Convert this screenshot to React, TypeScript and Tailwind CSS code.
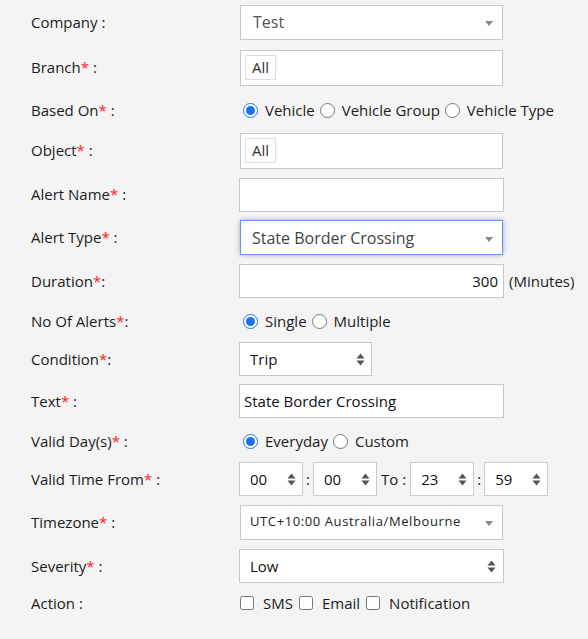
import React from "react";

const font = { fontFamily: '"Open Sans", "Noto Sans", sans-serif' };

function Req() {
  return <span className="text-[#ff2020]">*</span>;
}

function Caret() {
  return (
    <svg width="8" height="5" viewBox="0 0 8 5" className="absolute right-[9px] top-1/2 -translate-y-[1px]">
      <path d="M0 0h8L4 5z" fill="#888" />
    </svg>
  );
}

function UpDown({ className = "" }: { className?: string }) {
  return (
    <svg width="9" height="13" viewBox="0 0 9 13" className={className}>
      <path d="M0.5 5.5L4.5 0.5L8.5 5.5z M0.5 7.5L4.5 12.5L8.5 7.5z" fill="#555" />
    </svg>
  );
}

function Radio({ checked, label }: { checked?: boolean; label: string }) {
  return (
    <label className="flex items-center">
      <input
        type="radio"
        readOnly
        checked={!!checked}
        className="w-[15px] h-[15px] m-0 mr-[7px] ml-[3px] accent-[#1a73e8]"
      />
      <span className="mr-[2px]">{label}</span>
    </label>
  );
}

function Check({ label }: { label: string }) {
  return (
    <label className="flex items-center mr-[6px]">
      <input type="checkbox" className="w-[14px] h-[14px] m-0 mr-[9px]" />
      <span>{label}</span>
    </label>
  );
}

function Row({ h, label, children }: { h: string; label: React.ReactNode; children?: React.ReactNode }) {
  return (
    <div className={`flex items-center ${h}`}>
      <div className="w-[209px] shrink-0">{label}</div>
      <div className="flex items-center">{children}</div>
    </div>
  );
}

function TimeSelect({ value }: { value: string }) {
  return (
    <div className="relative w-[64px] h-[34px] bg-white border border-[#cccccc] flex items-center pl-[10px] text-[#111] text-[15px]">
      {value}
      <UpDown className="absolute right-[6px] top-[10px]" />
    </div>
  );
}

export default function App() {
  return (
    <div className="w-[588px] h-[639px] bg-[#f4f4f4] text-[#1c1c1c] text-[15px] pl-[31px] overflow-hidden" style={font}>
      <Row h="h-[44px]" label="Company :">
        <div className="relative w-[263px] h-[35px] bg-white border border-[#c8c8c8] flex items-center pl-[12px] text-[16px] text-[#555]">
          Test
          <Caret />
        </div>
      </Row>
      <Row h="h-[47px]" label={<>Branch<Req /> :</>}>
        <div className="w-[263px] h-[36px] bg-white border border-[#c8c8c8] flex items-center pl-[4px]">
          <span className="h-[25px] px-[6px] border border-[#dddddd] flex items-center text-[15px] text-[#333]">All</span>
        </div>
      </Row>
      <Row h="h-[38px]" label={<>Based On<Req /> :</>}>
        <Radio checked label="Vehicle" />
        <Radio label="Vehicle Group" />
        <Radio label="Vehicle Type" />
      </Row>
      <Row h="h-[43px]" label={<>Object<Req /> :</>}>
        <div className="w-[263px] h-[36px] bg-white border border-[#c8c8c8] flex items-center pl-[4px]">
          <span className="h-[25px] px-[6px] border border-[#dddddd] flex items-center text-[15px] text-[#333]">All</span>
        </div>
      </Row>
      <Row h="h-[45px]" label={<>Alert Name<Req /> :</>}>
        <div className="-ml-[1px] w-[265px] h-[34px] bg-white border border-[#c8c8c8]" />
      </Row>
      <Row h="h-[41px]" label={<>Alert Type<Req /> :</>}>
        <div className="relative w-[263px] h-[35px] bg-white border border-[#5897fb] shadow-[0_0_5px_rgba(0,0,0,0.3)] flex items-center pl-[11px] text-[16px] text-[#444]">
          State Border Crossing
          <Caret />
        </div>
      </Row>
      <Row h="h-[46px]" label={<>Duration<Req />:</>}>
        <div className="-ml-[1px] w-[265px] h-[34px] bg-white border border-[#c8c8c8] flex items-center justify-end pr-[5px] text-[#111]">
          300
        </div>
        <span className="ml-[5px]">(Minutes)</span>
      </Row>
      <Row h="h-[34px]" label={<>No Of Alerts<Req />:</>}>
        <Radio checked label="Single" />
        <Radio label="Multiple" />
      </Row>
      <Row h="h-[42px]" label={<>Condition<Req />:</>}>
        <div className="-ml-[1px] relative w-[133px] h-[34px] bg-white border border-[#c8c8c8] flex items-center pl-[10px] text-[#111]">
          Trip
          <UpDown className="absolute right-[6px] top-[10px]" />
        </div>
      </Row>
      <Row h="h-[42px]" label={<>Text<Req /> :</>}>
        <div className="-ml-[1px] w-[265px] h-[34px] bg-white border border-[#c8c8c8] flex items-center pl-[4px] text-[#111]">
          State Border Crossing
        </div>
      </Row>
      <Row h="h-[38px]" label={<>Valid Day(s)<Req /> :</>}>
        <Radio checked label="Everyday" />
        <Radio label="Custom" />
      </Row>
      <Row h="h-[38px]" label={<>Valid Time From<Req /> :</>}>
        <div className="-ml-[1px] flex items-center">
          <TimeSelect value="00" />
          <span className="w-[10px] text-center">:</span>
          <TimeSelect value="00" />
          <span className="px-[4px]">To :</span>
          <TimeSelect value="23" />
          <span className="w-[10px] text-center">:</span>
          <TimeSelect value="59" />
        </div>
      </Row>
      <Row h="h-[48px]" label={<>Timezone<Req /> :</>}>
        <div className="relative w-[263px] h-[35px] bg-white border border-[#c8c8c8] flex items-center pl-[9px] text-[13px] tracking-[0.6px] text-[#222]">
          UTC+10:00 Australia/Melbourne
          <Caret />
        </div>
      </Row>
      <Row h="h-[40px]" label={<>Severity<Req /> :</>}>
        <div className="-ml-[1px] relative w-[265px] h-[34px] bg-white border border-[#c8c8c8] flex items-center pl-[10px] text-[#111]">
          Low
          <UpDown className="absolute right-[7px] top-[10px]" />
        </div>
      </Row>
      <Row h="h-[34px]" label="Action :">
        <Check label="SMS" />
        <Check label="Email" />
        <Check label="Notification" />
      </Row>
    </div>
  );
}
